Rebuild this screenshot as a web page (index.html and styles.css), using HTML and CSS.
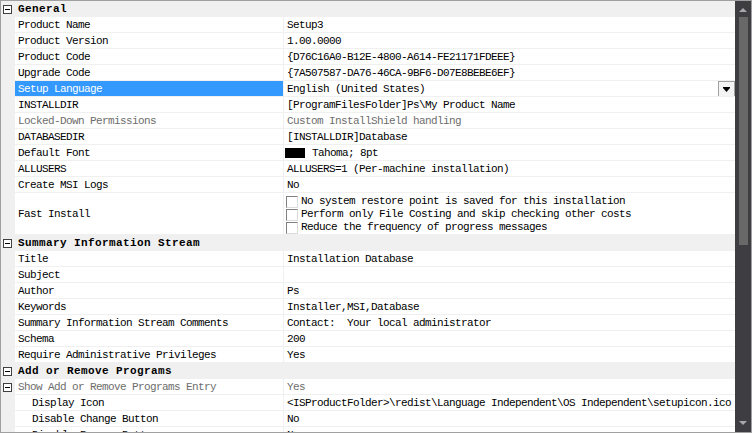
FILE: index.html
```html
<!DOCTYPE html>
<html>
<head>
<meta charset="utf-8">
<link rel="stylesheet" href="styles.css">
</head>
<body>
<div class="grid">
  <div class="list">
    <div class="row cat"><div class="m"><span class="exp"></span></div><div class="cname">General</div></div>
    <div class="row"><div class="m"></div><div class="n">Product Name</div><div class="v">Setup3</div></div>
    <div class="row"><div class="m"></div><div class="n">Product Version</div><div class="v">1.00.0000</div></div>
    <div class="row"><div class="m"></div><div class="n">Product Code</div><div class="v">{D76C16A0-B12E-4800-A614-FE21171FDEEE}</div></div>
    <div class="row"><div class="m"></div><div class="n">Upgrade Code</div><div class="v">{7A507587-DA76-46CA-9BF6-D07E8BEBE6EF}</div></div>
    <div class="row sel"><div class="m"></div><div class="n">Setup Language</div><div class="v">English (United States)<span class="drop"><svg width="7" height="5" viewBox="0 0 7 5"><rect x="0" y="0" width="7" height="1" fill="#000"/><path d="M0 1h7l-3.5 4z" fill="#000"/></svg></span></div></div>
    <div class="row"><div class="m"></div><div class="n">INSTALLDIR</div><div class="v">[ProgramFilesFolder]Ps\My Product Name</div></div>
    <div class="row dis"><div class="m"></div><div class="n">Locked-Down Permissions</div><div class="v">Custom InstallShield handling</div></div>
    <div class="row"><div class="m"></div><div class="n">DATABASEDIR</div><div class="v">[INSTALLDIR]Database</div></div>
    <div class="row"><div class="m"></div><div class="n">Default Font</div><div class="v"><span class="swatch"></span>Tahoma; 8pt</div></div>
    <div class="row"><div class="m"></div><div class="n">ALLUSERS</div><div class="v">ALLUSERS=1 (Per-machine installation)</div></div>
    <div class="row"><div class="m"></div><div class="n">Create MSI Logs</div><div class="v">No</div></div>
    <div class="row tall"><div class="m"></div><div class="n">Fast Install</div><div class="v checks">
      <div class="chk"><span class="box"></span>No system restore point is saved for this installation</div>
      <div class="chk"><span class="box"></span>Perform only File Costing and skip checking other costs</div>
      <div class="chk"><span class="box"></span>Reduce the frequency of progress messages</div>
    </div></div>
    <div class="row cat"><div class="m"><span class="exp"></span></div><div class="cname">Summary Information Stream</div></div>
    <div class="row"><div class="m"></div><div class="n">Title</div><div class="v">Installation Database</div></div>
    <div class="row"><div class="m"></div><div class="n">Subject</div><div class="v"></div></div>
    <div class="row"><div class="m"></div><div class="n">Author</div><div class="v">Ps</div></div>
    <div class="row"><div class="m"></div><div class="n">Keywords</div><div class="v">Installer,MSI,Database</div></div>
    <div class="row"><div class="m"></div><div class="n">Summary Information Stream Comments</div><div class="v">Contact:  Your local administrator</div></div>
    <div class="row"><div class="m"></div><div class="n">Schema</div><div class="v">200</div></div>
    <div class="row"><div class="m"></div><div class="n">Require Administrative Privileges</div><div class="v">Yes</div></div>
    <div class="row cat"><div class="m"><span class="exp"></span></div><div class="cname">Add or Remove Programs</div></div>
    <div class="row dis"><div class="m"><span class="exp"></span></div><div class="n">Show Add or Remove Programs Entry</div><div class="v">Yes</div></div>
    <div class="row"><div class="m"></div><div class="n ind">Display Icon</div><div class="v">&lt;ISProductFolder&gt;\redist\Language Independent\OS Independent\setupicon.ico</div></div>
    <div class="row"><div class="m"></div><div class="n ind">Disable Change Button</div><div class="v">No</div></div>
    <div class="row"><div class="m"></div><div class="n ind">Disable Remove Button</div><div class="v">No</div></div>
  </div>
  <div class="sb">
    <div class="arr up"></div>
    <div class="track"><div class="thumb"></div></div>
    <div class="arr down"></div>
  </div>
</div>
</body>
</html>
```
FILE: styles.css
```css
html, body {
  margin: 0;
  padding: 0;
  background: #fff;
}
.grid {
  width: 752px;
  height: 433px;
  box-sizing: border-box;
  border: 1px solid #a0a0a0;
  display: flex;
  overflow: hidden;
  font-family: "Liberation Mono", "DejaVu Sans Mono", monospace;
  font-size: 11px;
  letter-spacing: -0.6px;
  color: #000;
}
.list {
  flex: 1;
  display: flex;
  flex-direction: column;
  overflow: hidden;
  background: #f0f0f0;
}
.row {
  display: grid;
  grid-template-columns: 14px 269px 1fr;
  height: 16px;
  flex: none;
  line-height: 15px;
  white-space: pre;
}
.row.tall {
  height: 42px;
}
.m {
  background: #f0f0f0;
  position: relative;
}
.n {
  background: #fff;
  border-bottom: 1px solid #f0f0f0;
  border-right: 1px solid #f0f0f0;
  padding-left: 3px;
  padding-top: 1px;
  overflow: hidden;
}
.n.ind {
  padding-left: 17px;
}
.v {
  background: #fff;
  border-bottom: 1px solid #f0f0f0;
  padding-left: 3px;
  padding-top: 1px;
  overflow: hidden;
  position: relative;
  display: flex;
  align-items: center;
}
.tall .n {
  display: flex;
  align-items: center;
}
.v.checks {
  flex-direction: column;
  align-items: flex-start;
  justify-content: flex-start;
  padding-top: 2px;
  padding-left: 2px;
  box-sizing: border-box;
}
.chk {
  height: 13px;
  line-height: 13px;
  display: flex;
  align-items: center;
}
.box {
  width: 10px;
  height: 10px;
  border-top: 1px solid #808080;
  border-left: 1px solid #808080;
  border-right: 1px solid #dcdcdc;
  border-bottom: 1px solid #dcdcdc;
  background: #fff;
  margin-right: 3px;
  flex: none;
}
.cat .cname {
  grid-column: 2 / 4;
  background: #f0f0f0;
  font-weight: bold;
  letter-spacing: 0.4px;
  padding-left: 3px;
  padding-top: 1px;
}
.exp {
  position: absolute;
  left: 2px;
  top: 4px;
  width: 7px;
  height: 7px;
  border: 1px solid #404040;
  background: #fff;
}
.exp::after {
  content: "";
  position: absolute;
  left: 1px;
  top: 3px;
  width: 5px;
  height: 1px;
  background: #000;
}
.sel .n {
  background: #3399ff;
  color: #fff;
}
.dis .n, .dis .v {
  color: #6d6d6d;
}
.swatch {
  display: inline-block;
  width: 20px;
  height: 10px;
  background: #000;
  margin-left: -2px;
  margin-right: 7px;
}
.drop {
  position: absolute;
  right: 0;
  top: 0;
  width: 15px;
  height: 14px;
  border: 1px solid #a0a0a0;
  background: #f4f4f4;
  display: flex;
  align-items: center;
  justify-content: center;
}
.sb {
  width: 16px;
  flex: none;
  background: #3e3d42;
  display: flex;
  flex-direction: column;
  align-items: center;
}
.arr {
  width: 0;
  height: 0;
  border-left: 4px solid transparent;
  border-right: 4px solid transparent;
  flex: none;
}
.arr.up {
  border-bottom: 4px solid #a8a8a8;
  margin-top: 7px;
}
.arr.down {
  border-top: 4px solid #a8a8a8;
  margin-bottom: 7px;
}
.track {
  flex: 1;
  width: 100%;
  display: flex;
  justify-content: center;
  padding-top: 5px;
}
.thumb {
  width: 9px;
  height: 228px;
  background: #686868;
}
```
